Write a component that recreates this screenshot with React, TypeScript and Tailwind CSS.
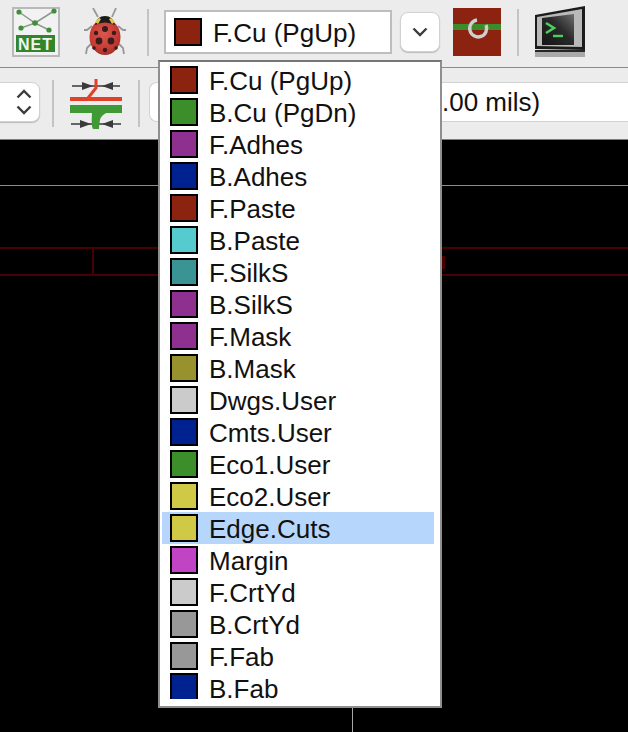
const layers = [
  { name: "F.Cu (PgUp)", color: "bg-[#8b2310]" },
  { name: "B.Cu (PgDn)", color: "bg-[#3c8e2a]" },
  { name: "F.Adhes", color: "bg-[#8e3090]" },
  { name: "B.Adhes", color: "bg-[#002291]" },
  { name: "F.Paste", color: "bg-[#8b2310]" },
  { name: "B.Paste", color: "bg-[#55cbcf]" },
  { name: "F.SilkS", color: "bg-[#3b9494]" },
  { name: "B.SilkS", color: "bg-[#8e3090]" },
  { name: "F.Mask", color: "bg-[#8e3090]" },
  { name: "B.Mask", color: "bg-[#97922d]" },
  { name: "Dwgs.User", color: "bg-[#cbcbcb]" },
  { name: "Cmts.User", color: "bg-[#002291]" },
  { name: "Eco1.User", color: "bg-[#3c8e2a]" },
  { name: "Eco2.User", color: "bg-[#cfc945]" },
  { name: "Edge.Cuts", color: "bg-[#cfc945]" },
  { name: "Margin", color: "bg-[#c044c4]" },
  { name: "F.CrtYd", color: "bg-[#cbcbcb]" },
  { name: "B.CrtYd", color: "bg-[#989898]" },
  { name: "F.Fab", color: "bg-[#989898]" },
  { name: "B.Fab", color: "bg-[#002291]" },
];

function Separator() {
  return <div className="h-[47px] w-0.5 shrink-0 bg-[#c4c4c4]" />;
}

function NetIcon() {
  return (
    <svg width="48" height="50" viewBox="0 0 48 50" className="shrink-0">
      <rect x="1" y="1" width="46" height="48" fill="#f2f2f2" stroke="#b9b9b9" strokeWidth="2" />
      <g stroke="#8d9a8d" strokeWidth="1.5" fill="none">
        <path d="M7 5 L23 16 L42 4" />
        <path d="M9 21 L23 16 L37 23" />
      </g>
      <g fill="#3f8f38">
        <circle cx="7" cy="5" r="2.6" />
        <circle cx="42" cy="4" r="2.6" />
        <circle cx="23" cy="16" r="2.8" />
        <circle cx="9" cy="21" r="2.6" />
        <circle cx="37" cy="23" r="2.6" />
      </g>
      <rect x="4" y="28" width="39" height="17" fill="#32852c" />
      <text x="23.5" y="43" textAnchor="middle" fontFamily="Liberation Sans" fontWeight="700" fontSize="16" letterSpacing="1" fill="#eef5ec">
        NET
      </text>
    </svg>
  );
}

function BugIcon() {
  return (
    <svg width="42" height="48" viewBox="0 0 42 48" className="shrink-0">
      <defs>
        <radialGradient id="shell" cx="0.45" cy="0.4" r="0.65">
          <stop offset="0" stopColor="#d9584e" />
          <stop offset="0.7" stopColor="#c63a32" />
          <stop offset="1" stopColor="#93302a" />
        </radialGradient>
      </defs>
      <g stroke="#979797" strokeWidth="1.8" fill="none">
        <path d="M14 9 L9 0 M28 9 L32 0" />
        <path d="M8 18 L3 22 L0 22 M34 18 L39 22 L42 22" />
        <path d="M7 36 L3 40 L2 46 M35 36 L39 40 L40 46" />
      </g>
      <ellipse cx="21" cy="29" rx="15.5" ry="18" fill="url(#shell)" />
      <path d="M11 17 Q13 8 21 8 Q29 8 31 17 Q21 12 11 17 Z" fill="#1d1b1a" />
      <path d="M11 14 L15 10 L17 11 L14 16 Z M31 14 L27 10 L25 11 L28 16 Z" fill="#e2c948" />
      <g fill="#3a1c1a">
        <circle cx="21" cy="21" r="3" />
        <circle cx="12" cy="25" r="2.2" />
        <circle cx="30" cy="25" r="2.2" />
        <circle cx="15" cy="33" r="3.4" />
        <circle cx="27" cy="33" r="3.4" />
        <circle cx="10" cy="40" r="1.8" />
        <circle cx="32" cy="40" r="1.8" />
        <circle cx="21" cy="42" r="2.2" />
      </g>
    </svg>
  );
}

function ViaIcon() {
  return (
    <svg width="48" height="48" viewBox="0 0 48 48" className="shrink-0">
      <rect width="48" height="48" fill="#8b2310" />
      <rect y="16" width="48" height="6" fill="#3d8b2a" />
      <path d="M24 12 A8.5 8.5 0 1 0 33 17" fill="none" stroke="#cfcfcf" strokeWidth="3.4" />
    </svg>
  );
}

function TerminalIcon() {
  return (
    <svg width="52" height="52" viewBox="0 0 52 52" className="shrink-0">
      <defs>
        <linearGradient id="screen" x1="0" y1="1" x2="1" y2="0">
          <stop offset="0" stopColor="#151515" />
          <stop offset="0.55" stopColor="#2a2a2a" />
          <stop offset="1" stopColor="#6d6d6d" />
        </linearGradient>
      </defs>
      <path d="M1 9 L51 0 V44 L1 43 Z" fill="#1b1b1b" />
      <path d="M3 11 L48 3 V41 L3 40 Z" fill="#b9b9b9" />
      <path d="M8 12 L40 8 V39 L8 39 Z" fill="url(#screen)" />
      <path d="M1 44 L51 45 V51 L1 51 Z" fill="#a9a9a9" />
      <path d="M1 44 L51 44 V46 L1 46 Z" fill="#262626" />
      <path d="M12 17 L20 22 L12 27" fill="none" stroke="#49d05f" strokeWidth="2.6" />
      <path d="M19 30 H29" stroke="#49d05f" strokeWidth="2.4" />
    </svg>
  );
}

function DrcIcon() {
  return (
    <svg width="52" height="50" viewBox="0 0 52 50" className="shrink-0">
      <g stroke="#3a3a3a" strokeWidth="1.6">
        <path d="M2 7 H50" />
        <path d="M1 45 H51" />
      </g>
      <g fill="#3a3a3a">
        <path d="M23 7 L12 3 V11 Z M32 7 L43 3 V11 Z" />
        <path d="M21 45 L10 41 V49 Z M32 45 L43 41 V49 Z" />
      </g>
      <path d="M26 0 V9 L18 19" fill="none" stroke="#e0412a" strokeWidth="3" />
      <rect y="18" width="52" height="4" fill="#e0412a" />
      <rect y="26" width="52" height="8" fill="#3f9a36" />
      <path d="M22 33 H38 Q31 36 30 41 Q29 46 29 50 H23 Q21 48 22 33 Z" fill="#3f9a36" />
    </svg>
  );
}

function Chevron({ up = false }: { up?: boolean }) {
  return (
    <svg width="16" height="10" viewBox="0 0 16 10" fill="none" stroke="#3c3c3c" strokeWidth="2.4">
      <path d={up ? "M1.5 8.5 L8 2 L14.5 8.5" : "M1.5 1.5 L8 8 L14.5 1.5"} />
    </svg>
  );
}

export default function App() {
  return (
    <div className="relative flex h-[732px] w-[628px] flex-col overflow-hidden bg-black font-['Liberation_Sans',Arial,sans-serif] text-[26px] leading-none text-[#111]">
      <div className="flex h-[68px] shrink-0 items-center border-b border-[#8a8a8a] bg-[#ececec] pb-[3px] pl-3">
        <NetIcon />
        <div className="ml-6">
          <BugIcon />
        </div>
        <div className="ml-[21px]">
          <Separator />
        </div>
        <div className="ml-[15px] flex h-[44px] w-[228px] shrink-0 items-center gap-[11px] border-2 border-[#bdbdbd] bg-white pl-2">
          <span className="h-7 w-7 shrink-0 border-2 border-black bg-[#8b2310]" />
          <span className="mt-0.5 leading-[22px]">F.Cu (PgUp)</span>
        </div>
        <div className="ml-2 flex h-10 w-10 shrink-0 items-center justify-center rounded-lg border border-[#d2d2d2] bg-white shadow-[0_1px_1px_#bbb]">
          <Chevron />
        </div>
        <div className="ml-[13px]">
          <ViaIcon />
        </div>
        <div className="ml-4">
          <Separator />
        </div>
        <div className="ml-[15px]">
          <TerminalIcon />
        </div>
      </div>

      <div className="flex h-[72px] shrink-0 items-center border-b border-[#7d7d7d] bg-[#ececec]">
        <div className="mb-1 ml-[-20px] flex h-10 w-[60px] shrink-0 flex-col items-end justify-center gap-[6px] rounded-lg border border-[#d2d2d2] bg-white pr-[7px] shadow-[0_1px_1px_#bbb]">
          <Chevron up />
          <Chevron />
        </div>
        <div className="ml-3">
          <Separator />
        </div>
        <div className="ml-4">
          <DrcIcon />
        </div>
        <div className="ml-4">
          <Separator />
        </div>
        <div className="mb-1 ml-[9px] flex h-10 flex-1 items-center rounded-l-lg border-y border-l border-[#d2d2d2] bg-white pl-[292px]">
          <span>.00 mils)</span>
        </div>
      </div>

      <div className="flex flex-1 flex-col">
        <div className="mt-[45px] h-px bg-[#8c8c8c]" />
        <div className="mt-[61px] flex h-[29px] border-y-2 border-[#4a0000]">
          <div className="ml-[92px] h-full w-0.5 bg-[#4a0000]" />
          <div className="ml-[348px] mt-[7px] h-[13px] w-[3px] bg-[#4a0000]" />
        </div>
        <div className="ml-[352px] mt-auto h-[26px] w-px bg-[#a8a8a8]" />
      </div>

      <div className="absolute left-[158px] top-[60px] h-[648px] w-[284px] border-2 border-[#8f8f8f] border-t-[#757575] bg-white pl-0.5 pr-1.5 pt-0.5">
        {layers.map((layer) => (
          <div
            key={layer.name}
            className={`flex h-8 items-center gap-[11px] pl-2 ${layer.name === "Edge.Cuts" ? "bg-[#b7d6fb]" : ""}`}
          >
            {/* the last row is cut off by the popup in the screenshot */}
            {layer.name === "B.Fab" ? (
              <span className={`mb-1 h-[26px] w-7 shrink-0 border-2 border-b-0 border-black ${layer.color}`} />
            ) : (
              <span className={`h-7 w-7 shrink-0 border-2 border-black ${layer.color}`} />
            )}
            <span className="mt-0.5 leading-[22px]">{layer.name}</span>
          </div>
        ))}
      </div>
    </div>
  );
}
